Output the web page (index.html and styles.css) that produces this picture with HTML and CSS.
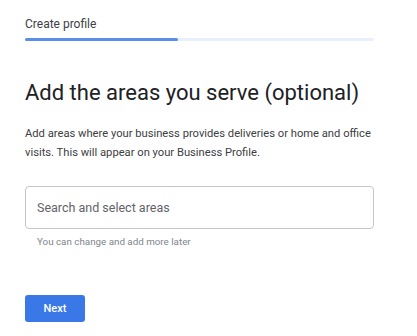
FILE: index.html
```html
<!DOCTYPE html>
<html lang="en">
<head>
    <meta charset="UTF-8">
    <meta name="viewport" content="width=device-width, initial-scale=1.0">
    <title>Create profile</title>
    <link rel="stylesheet" href="styles.css">
</head>
<body>
    <div class="page">
        <div class="top">
            <div class="step-title">Create profile</div>
            <div class="progress"><div class="progress-fill"></div></div>
        </div>

        <h1>Add the areas you serve (optional)</h1>

        <p class="intro">Add areas where your business provides deliveries or home and office visits. This will appear on your Business Profile.</p>

        <div class="field">
            <input type="text" class="area-input" placeholder="Search and select areas" />
            <div class="hint">You can change and add more later</div>
        </div>

        <button class="next">Next</button>
    </div>
</body>
</html>
```

FILE: styles.css
```css
body {
    margin: 0;
    background: #fff;
    font-family: Roboto, "Liberation Sans", sans-serif;
    color: #202124;
}
.page {
    width: 349px;
    padding: 18px 0 0 25px;
}
.step-title {
    font-size: 12px;
    color: #3c4043;
    line-height: 13px;
    height: 13px;
}
.progress {
    margin-top: 7px;
    height: 3px;
    background: #e8f0fe;
    border-radius: 2px;
}
.progress-fill {
    width: 153px;
    height: 3px;
    background: #5b8ee6;
    border-radius: 2px;
}
h1 {
    margin: 38px 0 0;
    font-size: 22px;
    font-weight: 400;
    line-height: 28px;
    color: #202124;
}
.intro {
    margin: 18px 0 0;
    font-size: 11.2px;
    line-height: 18.5px;
    color: #3c4043;
}
.field {
    margin-top: 24px;
}
.area-input {
    box-sizing: border-box;
    width: 349px;
    height: 43px;
    padding: 0 11px;
    border: 1px solid #c4c7c5;
    border-radius: 4px;
    font-family: inherit;
    font-size: 12.5px;
    color: #202124;
    outline: none;
}
.area-input::placeholder {
    color: #5f6368;
}
.hint {
    margin: 7px 0 0 12px;
    font-size: 9.8px;
    color: #80868b;
}
.next {
    margin-top: 48px;
    width: 60px;
    height: 27px;
    background: #3b78e7;
    color: #fff;
    border: none;
    border-radius: 3px;
    font-family: inherit;
    font-size: 11px;
    font-weight: 500;
    cursor: pointer;
}
```
